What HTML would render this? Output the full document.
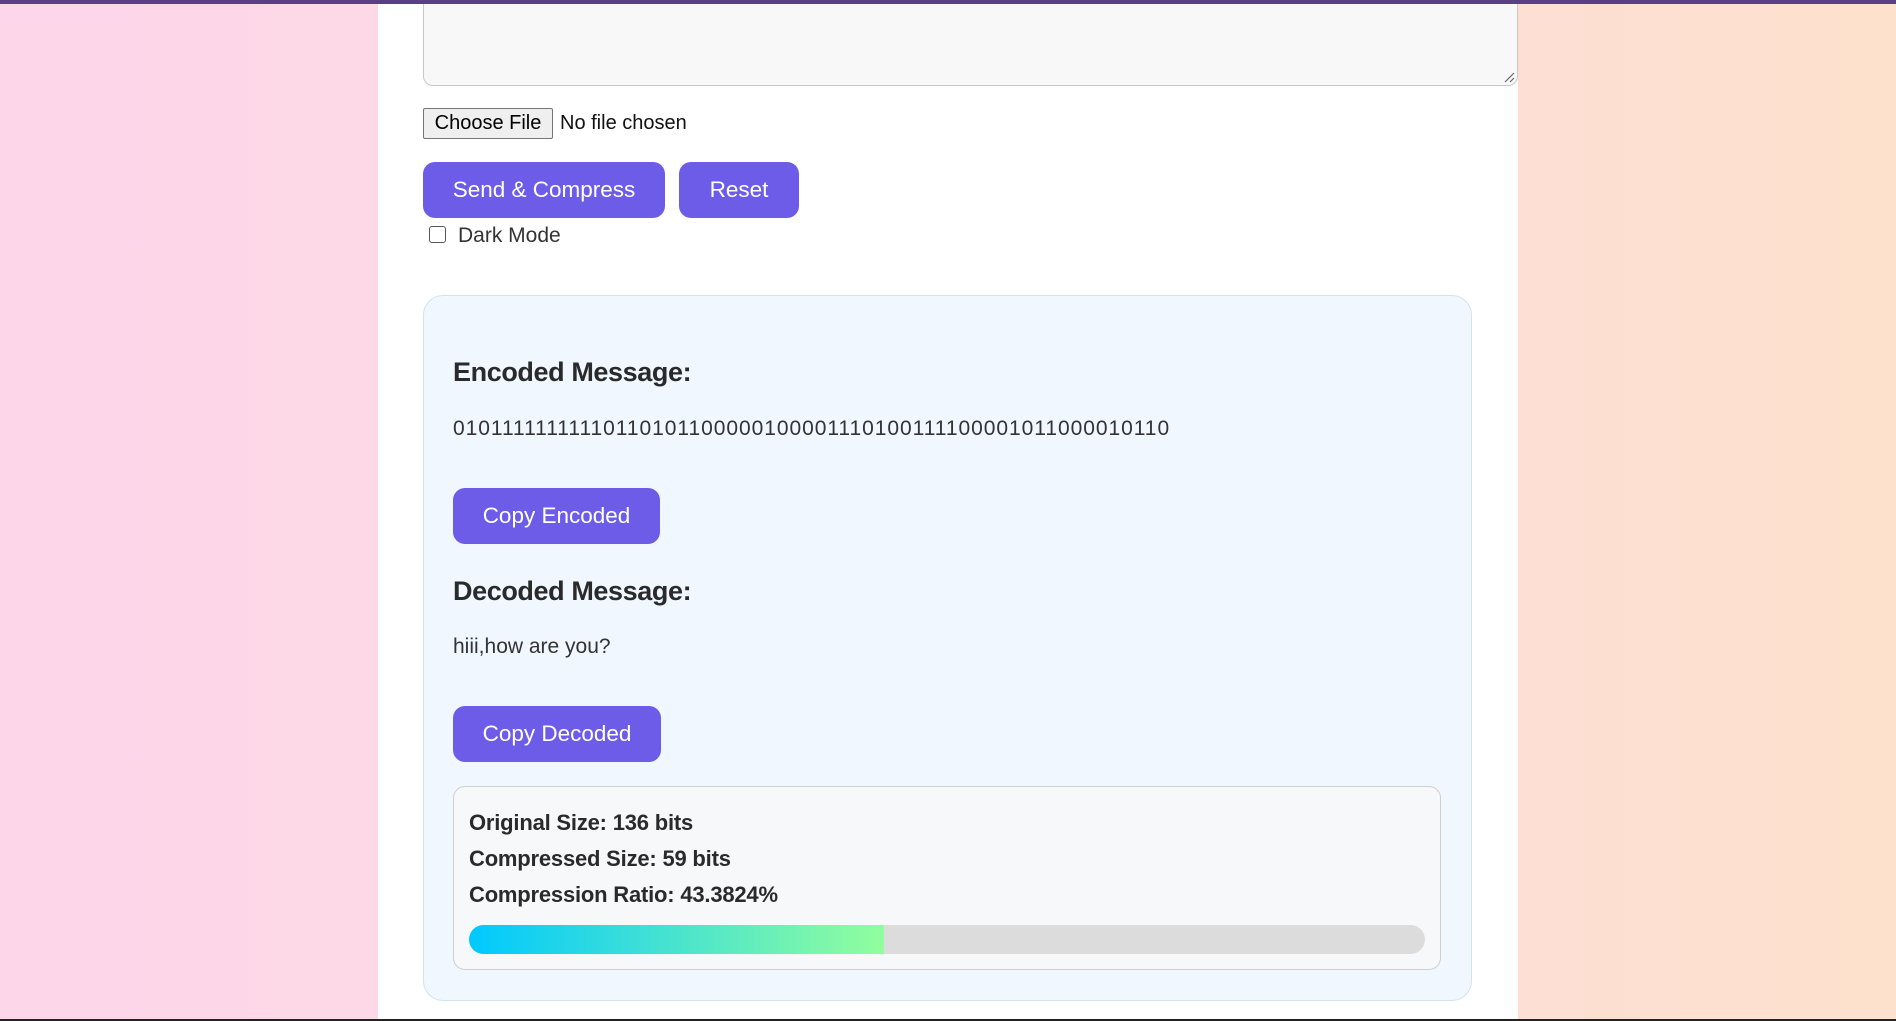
<!DOCTYPE html>
<html><head><meta charset="utf-8"><style>
*{box-sizing:border-box;margin:0;padding:0}
html,body{width:1896px;height:1021px;overflow:hidden}
body{background:linear-gradient(90deg,#fdd6ea 0%,#fddbe0 50%,#fde1cc 100%);font-family:"Liberation Sans",sans-serif;position:relative;color:#222}
.top{position:absolute;left:0;top:0;width:1896px;height:4px;background:#5b3f86;z-index:5}
.bot{position:absolute;left:0;top:1019px;width:1896px;height:2px;background:#222}
.wrap{position:absolute;left:378px;top:4px;width:1140px;height:1015px;background:#fff}
.ta{position:absolute;left:423px;top:-10px;width:1095px;height:96px;background:#f8f8f8;border:1px solid #c8c8c8;border-radius:10px}
.file{position:absolute;left:423px;top:108px;width:130px;height:31px;background:#efefef;border:1px solid #767676;border-radius:2px;font-size:20px;text-align:center;line-height:29px;color:#000}
.nf{position:absolute;left:560px;top:112px;font-size:20px;color:#111}
.btn{position:absolute;background:#6c5ce7;color:#fff;border-radius:12px;font-size:22.5px;text-align:center}
.cb{position:absolute;left:429px;top:226px;width:17px;height:17px;border:1.5px solid #555;border-radius:3px;background:#fff}
.dm{position:absolute;left:458px;top:224px;font-size:21px;color:#333}
.res{position:absolute;left:423px;top:295px;width:1049px;height:706px;background:#f0f7fe;border:1px solid #cfe3f6;border-radius:20px}
.h{position:absolute;left:453px;font-size:27px;font-weight:bold;color:#2a2a2a;letter-spacing:-0.4px}
.t{position:absolute;left:453px;font-size:21px;color:#333}
.stats{position:absolute;left:453px;top:786px;width:988px;height:184px;background:#f7f8fa;border:1px solid #cfcfcf;border-radius:12px}
.s{position:absolute;left:469px;font-size:22px;font-weight:bold;color:#2a2a2a;letter-spacing:-0.2px}
.bar{position:absolute;left:469px;top:925px;width:956px;height:29px;background:#dcdcdc;border-radius:15px;overflow:hidden}
.fill{width:415px;height:100%;background:linear-gradient(90deg,#00c9ff,#92fe9d)}
</style></head><body>
<div class="wrap"></div>
<div class="top"></div>
<div class="ta"><svg style="position:absolute;right:2px;bottom:2px" width="12" height="12"><path d="M11 2L2 11M11 7L7 11" stroke="#666" stroke-width="1.2"/></svg></div>
<div class="file">Choose File</div>
<div class="nf">No file chosen</div>
<div class="btn" style="left:423px;top:162px;width:242px;height:56px;line-height:56px">Send &amp; Compress</div>
<div class="btn" style="left:679px;top:162px;width:120px;height:56px;line-height:56px">Reset</div>
<div class="cb"></div>
<div class="dm">Dark Mode</div>
<div class="res"></div>
<div class="h" style="top:357px">Encoded Message:</div>
<div class="t" style="top:417px;letter-spacing:0.95px">01011111111110110101100000100001110100111100001011000010110</div>
<div class="btn" style="left:453px;top:488px;width:207px;height:56px;line-height:56px">Copy Encoded</div>
<div class="h" style="top:576px">Decoded Message:</div>
<div class="t" style="top:635px">hiii,how are you?</div>
<div class="btn" style="left:453px;top:706px;width:208px;height:56px;line-height:56px">Copy Decoded</div>
<div class="stats"></div>
<div class="s" style="top:810px">Original Size: 136 bits</div>
<div class="s" style="top:846px">Compressed Size: 59 bits</div>
<div class="s" style="top:882px">Compression Ratio: 43.3824%</div>
<div class="bar"><div class="fill"></div></div>
<div class="bot"></div>
</body></html>
